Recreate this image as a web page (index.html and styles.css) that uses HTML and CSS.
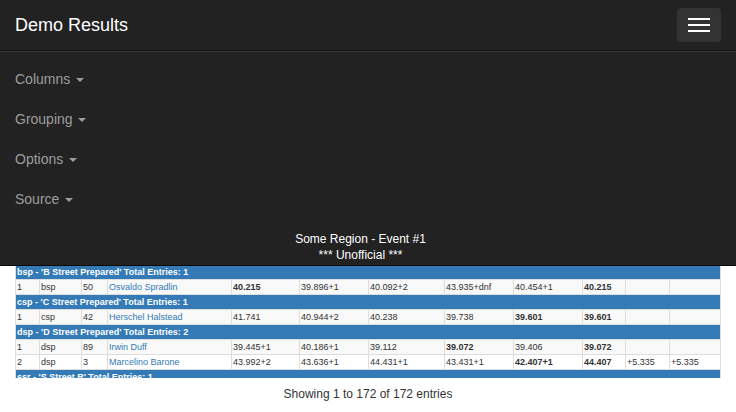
FILE: index.html
```html
<!DOCTYPE html>
<html lang="en">
<head>
    <meta charset="utf-8">
    <title>Demo Results</title>
    <meta name="viewport" content="width=device-width, initial-scale=1.0">
    <link rel="stylesheet" href="styles.css">
</head>
<body>
    <nav class="navbar">
        <div class="navbar-header">
            <a class="brand" href="#">Demo Results</a>
            <button class="toggle" type="button">
                <span class="bar"></span>
                <span class="bar"></span>
                <span class="bar"></span>
            </button>
        </div>
        <div class="navbar-menu">
            <ul class="nav">
                <li><a href="#">Columns <span class="caret"></span></a></li>
                <li><a href="#">Grouping <span class="caret"></span></a></li>
                <li><a href="#">Options <span class="caret"></span></a></li>
                <li><a href="#">Source <span class="caret"></span></a></li>
            </ul>
            <div class="event-title">
                <div>Some Region - Event #1</div>
                <div>*** Unofficial ***</div>
            </div>
        </div>
    </nav>

    <div class="results">
        <table class="results-table">
            <colgroup>
                <col class="c-pos">
                <col class="c-class">
                <col class="c-num">
                <col class="c-name">
                <col class="c-run1">
                <col class="c-run2">
                <col class="c-run3">
                <col class="c-run2">
                <col class="c-run2">
                <col class="c-best">
                <col class="c-diff1">
                <col class="c-diff2">
            </colgroup>
            <tbody>
                <tr class="group"><td colspan="12">bsp - 'B Street Prepared' Total Entries: 1</td></tr>
                <tr class="odd">
                    <td>1</td><td>bsp</td><td>50</td><td><a href="#">Osvaldo Spradlin</a></td>
                    <td><b>40.215</b></td><td>39.896+1</td><td>40.092+2</td><td>43.935+dnf</td><td>40.454+1</td><td><b>40.215</b></td><td></td><td></td>
                </tr>
                <tr class="group"><td colspan="12">csp - 'C Street Prepared' Total Entries: 1</td></tr>
                <tr class="odd">
                    <td>1</td><td>csp</td><td>42</td><td><a href="#">Herschel Halstead</a></td>
                    <td>41.741</td><td>40.944+2</td><td>40.238</td><td>39.738</td><td><b>39.601</b></td><td><b>39.601</b></td><td></td><td></td>
                </tr>
                <tr class="group"><td colspan="12">dsp - 'D Street Prepared' Total Entries: 2</td></tr>
                <tr class="odd">
                    <td>1</td><td>dsp</td><td>89</td><td><a href="#">Irwin Duff</a></td>
                    <td>39.445+1</td><td>40.186+1</td><td>39.112</td><td><b>39.072</b></td><td>39.406</td><td><b>39.072</b></td><td></td><td></td>
                </tr>
                <tr>
                    <td>2</td><td>dsp</td><td>3</td><td><a href="#">Marcelino Barone</a></td>
                    <td>43.992+2</td><td>43.636+1</td><td>44.431+1</td><td>43.431+1</td><td><b>42.407+1</b></td><td><b>44.407</b></td><td>+5.335</td><td>+5.335</td>
                </tr>
                <tr class="group"><td colspan="12">ssr - 'S Street R' Total Entries: 1</td></tr>
            </tbody>
        </table>
    </div>

    <div class="info">Showing 1 to 172 of 172 entries</div>
</body>
</html>
```

FILE: styles.css
```css
body {
    font-family: "Liberation Sans", Arial, sans-serif;
    font-size: 14px;
    line-height: 20px;
    margin: 0;
    padding: 0;
    color: #333;
    background-color: #fff;
}
a {
    text-decoration: none;
}

/* top bar */
.navbar {
    background-color: #222;
    border-bottom: 1px solid #080808;
}
.navbar-header {
    display: flex;
    justify-content: space-between;
    align-items: center;
    height: 50px;
    padding: 0 15px;
}
.brand {
    font-size: 18px;
    color: #fff;
}
.toggle {
    display: flex;
    flex-direction: column;
    gap: 4px;
    width: 44px;
    height: 34px;
    padding: 10px 11px;
    background-color: #333;
    border: none;
    border-radius: 4px;
}
.bar {
    display: block;
    width: 22px;
    height: 2px;
    background-color: #fff;
}
.navbar-menu {
    border-top: 1px solid #101010;
    box-shadow: inset 0 1px 0 rgba(255,255,255,0.1);
}
.nav {
    list-style: none;
    margin: 0;
    padding: 8px 0 12px;
}
.nav a {
    display: block;
    padding: 10px 15px;
    color: #9d9d9d;
}
.caret {
    display: inline-block;
    width: 0;
    height: 0;
    margin-left: 2px;
    vertical-align: middle;
    border-top: 4px solid #9d9d9d;
    border-left: 4px solid transparent;
    border-right: 4px solid transparent;
}
.event-title {
    font-size: 12px;
    line-height: 16px;
    color: #fff;
    text-align: center;
    padding-bottom: 2px;
    padding-right: 15px;
}

/* results table */
.results {
    height: 112px;
    overflow: hidden;
    padding: 0 15px;
}
.results-table {
    table-layout: fixed;
    width: 706px;
    margin-top: -1px;
    border-collapse: separate;
    border-spacing: 0;
    border-left: 1px solid #ddd;
    font-size: 9px;
    line-height: 14px;
}
.results-table td {
    height: 14px;
    padding: 0 1px;
    border-right: 1px solid #ddd;
    border-bottom: 1px solid #ddd;
    white-space: nowrap;
    overflow: hidden;
}
.results-table a {
    color: #337ab7;
}
.results-table .odd td {
    background-color: #f9f9f9;
}
.results-table .group td {
    background-color: #337ab7;
    color: #fff;
    font-weight: bold;
}
.c-pos { width: 24px; }
.c-class { width: 42px; }
.c-num { width: 26px; }
.c-name { width: 124px; }
.c-run1 { width: 68px; }
.c-run2 { width: 69px; }
.c-run3 { width: 76px; }
.c-best { width: 43px; }
.c-diff1 { width: 44px; }
.c-diff2 { width: 51px; }

.info {
    font-size: 12px;
    line-height: 17px;
    text-align: center;
    padding-top: 8px;
}
```
